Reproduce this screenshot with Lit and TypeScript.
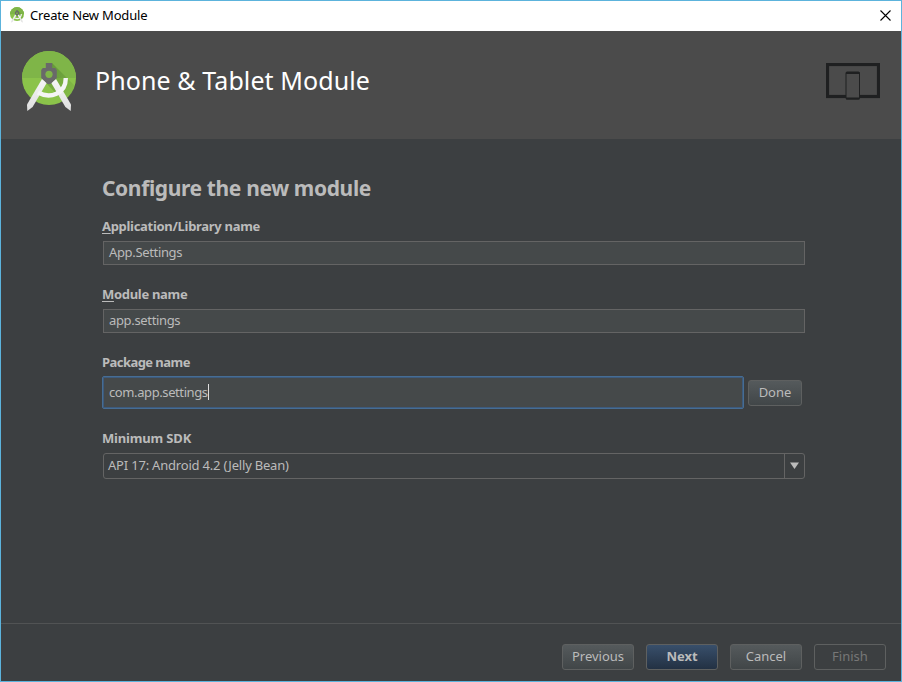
import { LitElement, html, css } from "lit";
import { customElement, property } from "lit/decorators.js";
import { classMap } from "lit/directives/class-map.js";

@customElement("studio-logo")
class StudioLogo extends LitElement {
  static styles = css`
    :host { display: block; }
    svg { display: block; width: 100%; height: 100%; }
  `;
  render() {
    return html`<svg viewBox="0 0 54 61">
      <defs>
        <clipPath id="disc"><circle cx="27" cy="27" r="27" /></clipPath>
        <linearGradient id="leg" x1="0" y1="0" x2="0" y2="1">
          <stop offset="0" stop-color="#f6f6f6" /><stop offset="1" stop-color="#dedede" />
        </linearGradient>
        <linearGradient id="shade" x1="0" y1="0" x2="1" y2="1">
          <stop offset="0" stop-color="#4f7f2c" stop-opacity=".6" /><stop offset="1" stop-color="#4f7f2c" stop-opacity="0" />
        </linearGradient>
      </defs>
      <circle cx="27" cy="27" r="27" fill="#8bc34a" />
      <g clip-path="url(#disc)">
        <rect width="54" height="27" fill="#7fb548" />
        <path d="M30 12 L54 36 V54 H45 L24 32 Z" fill="url(#shade)" />
      </g>
      <path d="M20 28 L25 31.5 L10.6 56 L5.3 60 L5 53.4Z" fill="url(#leg)" />
      <path d="M34 28 L29 31.5 L43.4 56 L48.7 60 L49 53.4Z" fill="url(#leg)" />
      <path d="M16 41.5 C28 48 43.8 43 43.8 27" fill="none" stroke="#f5f5f5" stroke-width="4.4" />
      <path fill="#696969" d="M23.8 12 H30.2 V17 H33.2 L34.8 19 V27 L28.5 33 H25.5 L19.2 27 V19 L20.8 17 H23.8Z" />
      <circle cx="27" cy="23.3" r="3.6" fill="#7fb548" />
    </svg>`;
  }
}

@customElement("dark-button")
class DarkButton extends LitElement {
  @property() kind = "";
  static styles = css`
    :host { display: block; height: 26px; }
    button {
      box-sizing: border-box; width: 100%; height: 100%; padding: 0 0 2px;
      border: 1px solid #5e6060; border-radius: 3px;
      background: linear-gradient(#555a5c, #414648);
      color: #bbbbbb; font: inherit; display: block;
    }
    .primary { background: linear-gradient(#384f6b, #233143); font-weight: 700; }
    .disabled { background: none; color: #777777; }
  `;
  render() {
    return html`<button class=${classMap({ primary: this.kind === "primary", disabled: this.kind === "disabled" })}><slot></slot></button>`;
  }
}

@customElement("app-root")
class AppRoot extends LitElement {
  static styles = css`
    :host {
      display: flex; flex-direction: column; box-sizing: border-box;
      width: 902px; height: 682px; border: 1px solid #5cb3dc;
      background: #3c3f41; color: #bbbbbb;
      font: 13px/18px "Noto Sans", "Open Sans", sans-serif;
    }
    .titlebar {
      height: 30px; box-sizing: border-box; background: #fff; color: #000;
      display: flex; align-items: center; padding: 0 10px 2px 9px;
    }
    .small-logo { width: 14px; height: 16px; margin-right: 6px; }
    .caption { flex: 1; letter-spacing: -0.17px; }
    .close { display: block; width: 11px; height: 11px; }
    .header {
      height: 108px; box-sizing: border-box; background: #4b4b4b;
      display: flex; align-items: center; padding: 0 21px 8px 21px;
    }
    .big-logo { width: 54px; height: 61px; }
    .heading { flex: 1; margin-left: 19px; padding-bottom: 2px; color: #fff; font-size: 25px; line-height: 36px; letter-spacing: 0.09px; }
    .device { margin-top: 2px; }
    .content { flex: 1; padding: 33px 96px 0 101px; }
    .subtitle { font-size: 21px; line-height: 32px; font-weight: 700; margin-bottom: 13px; letter-spacing: -0.37px; }
    .label { font-weight: 700; height: 18px; letter-spacing: -0.3px; }
    .label u { text-underline-offset: 2px; }
    .label.tight { letter-spacing: -0.55px; }
    .label.loose { letter-spacing: -0.17px; }
    .field { height: 68px; }
    .input {
      box-sizing: border-box; height: 24px; margin: 6px 0 0 1px; letter-spacing: -0.34px;
      border: 1px solid #646464; background: #45494a; padding: 1px 5px;
    }
    .package-row { display: flex; align-items: flex-start; gap: 4px; margin-top: 5px; }
    .focused {
      box-sizing: border-box; width: 642px; height: 33px; padding: 0 6px 1px;
      border: 1px solid #466d94; border-radius: 2px; box-shadow: inset 0 0 0 1px #3d5a7c;
      background: #45494a; display: flex; align-items: center; letter-spacing: -0.4px;
    }
    .caret { width: 1px; height: 16px; background: #dddddd; }
    .done { width: 54px; margin-top: 4px; }
    .package { height: 76px; }
    .combo {
      box-sizing: border-box; height: 26px; margin: 6px 0 0 1px;
      border: 1px solid #646464; border-radius: 3px; display: flex;
    }
    .value { flex: 1; padding: 2px 4px; letter-spacing: -0.2px; }
    .arrow { width: 18px; padding-right: 1px; padding-bottom: 1px; border-left: 1px solid #646464; display: flex; align-items: center; justify-content: center; }
    .footer {
      box-sizing: border-box; height: 58px; border-top: 1px solid #515354;
      padding: 20px 15px 0; display: flex; justify-content: flex-end; gap: 12px;
    }
    .footer dark-button { width: 72px; }
  `;

  private device() {
    return html`<svg class="device" width="54" height="38" viewBox="0 0 54 38">
      <rect x="1.5" y="1.5" width="51" height="32" fill="none" stroke="#1f2021" stroke-width="3.2" />
      <rect x="20" y="9" width="13.5" height="27" rx="1" fill="#4b4b4b" stroke="#1f2021" />
      <path d="M20 10H33.5M20 35.5H33.5" stroke="#1f2021" stroke-width="2.2" />
    </svg>`;
  }

  render() {
    return html`
      <div class="titlebar">
        <studio-logo class="small-logo"></studio-logo>
        <span class="caption">Create New Module</span>
        <svg class="close" viewBox="0 0 11 11"><path d="M.5 .5L10.5 10.5M10.5 .5L.5 10.5" stroke="#000" stroke-width="1.1" /></svg>
      </div>
      <div class="header">
        <studio-logo class="big-logo"></studio-logo>
        <div class="heading">Phone &amp; Tablet Module</div>
        ${this.device()}
      </div>
      <div class="content">
        <div class="subtitle">Configure the new module</div>
        <div class="field">
          <div class="label"><u>A</u>pplication/Library name</div>
          <div class="input">App.Settings</div>
        </div>
        <div class="field">
          <div class="label"><u>M</u>odule name</div>
          <div class="input">app.settings</div>
        </div>
        <div class="package">
          <div class="label tight">Package name</div>
          <div class="package-row">
            <div class="focused"><span>com.app.settings</span><span class="caret"></span></div>
            <dark-button class="done">Done</dark-button>
          </div>
        </div>
        <div class="label loose">Minimum SDK</div>
        <div class="combo">
          <div class="value">API 17: Android 4.2 (Jelly Bean)</div>
          <div class="arrow"><svg width="9" height="7" viewBox="0 0 9 7"><path d="M0 .5H9L4.5 7Z" fill="#bbbbbb" /></svg></div>
        </div>
      </div>
      <div class="footer">
        <dark-button>Previous</dark-button>
        <dark-button kind="primary">Next</dark-button>
        <dark-button>Cancel</dark-button>
        <dark-button kind="disabled">Finish</dark-button>
      </div>
    `;
  }
}
